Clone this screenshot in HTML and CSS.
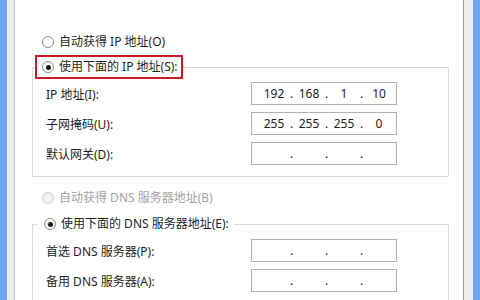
FILE: index.html
```html
<!DOCTYPE html>
<html lang="zh-CN">
<head>
    <meta charset="UTF-8">
    <title>Internet 协议版本 4 (TCP/IPv4) 属性</title>
    <link rel="stylesheet" href="styles.css">
</head>
<body>
    <div class="frame-left"></div>
    <div class="dialog">
        <div class="option option-top">
            <span class="radio"></span>
            <span>自动获得 IP 地址(O)</span>
        </div>

        <fieldset class="group group-ip">
            <legend class="option legend-marked">
                <span class="radio checked"></span>
                <span>使用下面的 IP 地址(S):</span>
            </legend>
            <div class="row">
                <label>IP 地址(I):</label>
                <div class="ipbox">
                    <span class="oct">192</span><span class="dot">.</span>
                    <span class="oct">168</span><span class="dot">.</span>
                    <span class="oct">1</span><span class="dot">.</span>
                    <span class="oct">10</span>
                </div>
            </div>
            <div class="row">
                <label>子网掩码(U):</label>
                <div class="ipbox">
                    <span class="oct">255</span><span class="dot">.</span>
                    <span class="oct">255</span><span class="dot">.</span>
                    <span class="oct">255</span><span class="dot">.</span>
                    <span class="oct">0</span>
                </div>
            </div>
            <div class="row">
                <label>默认网关(D):</label>
                <div class="ipbox">
                    <span class="oct"></span><span class="dot">.</span>
                    <span class="oct"></span><span class="dot">.</span>
                    <span class="oct"></span><span class="dot">.</span>
                    <span class="oct"></span>
                </div>
            </div>
        </fieldset>

        <div class="option option-top option-disabled">
            <span class="radio disabled"></span>
            <span>自动获得 DNS 服务器地址(B)</span>
        </div>

        <fieldset class="group group-dns">
            <legend class="option legend-plain">
                <span class="radio checked"></span>
                <span>使用下面的 DNS 服务器地址(E):</span>
            </legend>
            <div class="row">
                <label>首选 DNS 服务器(P):</label>
                <div class="ipbox">
                    <span class="oct"></span><span class="dot">.</span>
                    <span class="oct"></span><span class="dot">.</span>
                    <span class="oct"></span><span class="dot">.</span>
                    <span class="oct"></span>
                </div>
            </div>
            <div class="row">
                <label>备用 DNS 服务器(A):</label>
                <div class="ipbox">
                    <span class="oct"></span><span class="dot">.</span>
                    <span class="oct"></span><span class="dot">.</span>
                    <span class="oct"></span><span class="dot">.</span>
                    <span class="oct"></span>
                </div>
            </div>
        </fieldset>
    </div>
    <div class="frame-right"></div>
</body>
</html>
```

FILE: styles.css
```css
html, body {
    height: 100%;
}
body {
    margin: 0;
    display: flex;
    overflow: hidden;
    font-family: "Noto Sans", "Noto Sans CJK SC", sans-serif;
    font-size: 12px;
    color: #1e1e1e;
    background: white;
}
.frame-left {
    width: 7px;
    border-left: 7px solid #6ea6f2;
    border-right: 1px solid #c4c4c4;
    background: #ededed;
}
.frame-right {
    width: 9px;
    border-left: 1px solid #a0a0a0;
    border-right: 7px solid #6ea6f2;
    background: #ededed;
}
.dialog {
    flex: 1;
    padding: 33px 14px 0 17px;
}
.option {
    display: flex;
    align-items: center;
    gap: 5px;
    height: 18px;
    line-height: 18px;
    white-space: nowrap;
}
.option-top {
    padding-left: 10px;
}
.option-disabled {
    margin-top: 12px;
    color: #a3a3a3;
}
.radio {
    width: 10px;
    height: 10px;
    border: 1px solid #8c8c8c;
    border-radius: 50%;
    background: white;
    display: flex;
    align-items: center;
    justify-content: center;
    flex-shrink: 0;
}
.radio.checked::after {
    content: "";
    width: 5px;
    height: 5px;
    border-radius: 50%;
    background: #1c1c1c;
}
.radio.disabled {
    border-color: #cacaca;
    background: #f3f3f3;
}
.group {
    margin: 0;
    padding: 0 0 11px 0;
    border: 1px solid #dcdcdc;
}
.group-ip {
    margin-top: 4px;
}
.group-dns {
    margin-top: 5px;
}
.group legend {
    height: 20px;
    padding: 0 3px 0 5px;
    border: 2px solid transparent;
}
.legend-marked {
    margin-left: 2px;
    border-color: #cc1a22 !important;
}
.legend-plain {
    margin-left: 4px;
}
.row {
    display: flex;
    align-items: center;
    margin-top: 7px;
    padding-left: 13px;
}
.group .row:first-of-type {
    margin-top: 3px;
}
.row label {
    width: 205px;
}
.ipbox {
    width: 137px;
    height: 21px;
    padding-left: 7px;
    border: 1px solid #b2b2b2;
    display: flex;
    align-items: center;
}
.oct {
    width: 30px;
    text-align: center;
}
.dot {
    width: 5px;
    text-align: center;
}
```
